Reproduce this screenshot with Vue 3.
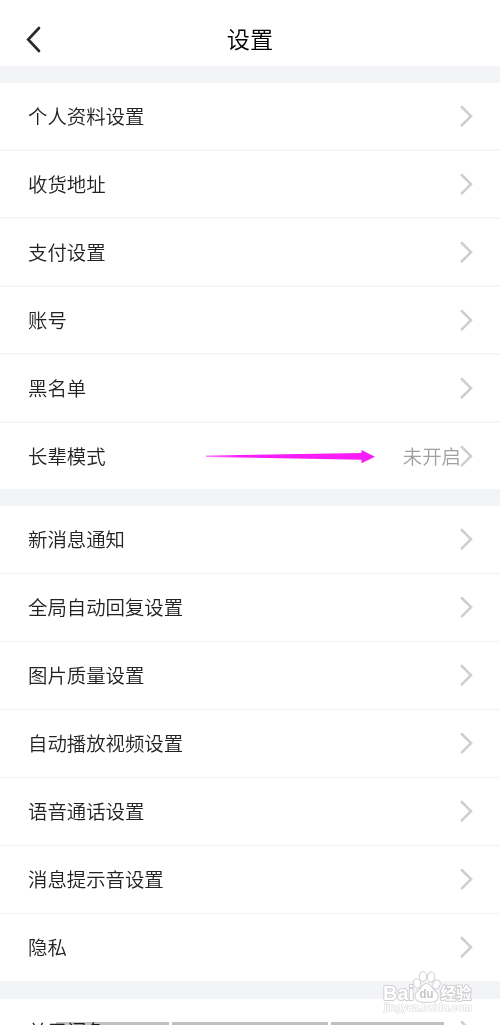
<script setup>
const groups = [
  [
    { label: '个人资料设置' },
    { label: '收货地址' },
    { label: '支付设置' },
    { label: '账号' },
    { label: '黑名单' },
    { label: '长辈模式', value: '未开启', arrow: true },
  ],
  [
    { label: '新消息通知' },
    { label: '全局自动回复设置' },
    { label: '图片质量设置' },
    { label: '自动播放视频设置' },
    { label: '语音通话设置' },
    { label: '消息提示音设置' },
    { label: '隐私' },
  ],
  [{ label: '关于闲鱼' }],
]
</script>

<template>
  <div class="screen">
    <header class="header">
      <svg class="back" width="20" height="30" viewBox="0 0 20 30">
        <path d="M14 4 3.200 15.500 14 27" fill="none" stroke="#2b2b2b" stroke-width="2.700" stroke-linecap="round" />
      </svg>
      <h1 class="title">设置</h1>
    </header>
    <section v-for="(group, g) in groups" :key="g" class="group">
      <div v-for="item in group" :key="item.label" class="row">
        <span class="label">{{ item.label }}</span>
        <svg v-if="item.arrow" class="pointer" width="172" height="16" viewBox="0 0 172 16">
          <defs>
            <linearGradient id="fade" x1="0" x2="1" y1="0" y2="0">
              <stop offset="0" stop-color="#f81df8" stop-opacity="0.55" />
              <stop offset="0.2" stop-color="#f81df8" />
            </linearGradient>
          </defs>
          <path d="M1 6.500 156.500 4V1L170 7.800 156.500 14.200V10.700L1 7.900Z" fill="url(#fade)" />
        </svg>
        <span v-if="item.value" class="value">{{ item.value }}</span>
        <svg class="chevron" width="13" height="22" viewBox="0 0 13 22">
          <path d="M1.800 2 11 11.200 1.800 20.400" fill="none" stroke="#cecece" stroke-width="2.500" stroke-linecap="round" />
        </svg>
      </div>
    </section>
    <div class="bars"><i></i><i></i><i></i></div>
    <svg class="mark" width="104" height="50" viewBox="0 0 104 50">
      <g fill="#fff" stroke="#d4d4d7" stroke-width="1.100">
        <ellipse cx="37" cy="17.500" rx="3.500" ry="4.700" transform="rotate(-15 37 17.500)" />
        <ellipse cx="43" cy="10.500" rx="3.700" ry="5" />
        <ellipse cx="51" cy="11" rx="3.700" ry="5" transform="rotate(10 51 11)" />
        <ellipse cx="56.500" cy="18.500" rx="3.500" ry="4.700" transform="rotate(20 56.500 18.500)" />
        <path d="M46.500 17.500C42.500 17.500 41.500 22 38 25C33.500 28 34 34 39 35.500C43 36.500 50 36.500 54.500 35.500C59.500 34 59.500 28 55 25C51.500 22 50.500 17.500 46.500 17.500Z" />
      </g>
      <g class="marktext">
        <text x="3" y="33.500" font-size="21" textLength="31" lengthAdjust="spacingAndGlyphs">Bai</text>
        <text x="39.500" y="32" font-size="13.500" textLength="14" lengthAdjust="spacingAndGlyphs" class="du">du</text>
        <text x="60.500" y="32.500" font-size="15.500" textLength="31">经验</text>
        <text x="4" y="45" font-size="10" textLength="88" lengthAdjust="spacingAndGlyphs" class="url">jingyan.baidu.com</text>
      </g>
    </svg>
  </div>
</template>

<style>
html,
body {
  overflow: hidden;
}
</style>

<style scoped>
.screen {
  position: relative;
  width: 500px;
  height: 1025px;
  overflow: hidden;
  background: #f3f4f8;
  font-family: 'Noto Sans CJK SC', sans-serif;
  font-weight: 350;
  color: #222;
}
.header {
  position: relative;
  height: 66px;
  background: #fff;
  display: flex;
  justify-content: center;
  padding-top: 12px;
  box-sizing: border-box;
}
.back {
  position: absolute;
  left: 25px;
  top: 24px;
}
.title {
  margin: 0;
  font-size: 23.2px;
  line-height: 53px;
  font-weight: 350;
  color: #000;
}
.group {
  margin-top: 17px;
  background: #fff;
}
.group:nth-of-type(3) {
  margin-top: 18px;
}
.row {
  position: relative;
  display: flex;
  align-items: center;
  height: 68px;
  box-sizing: border-box;
  padding: 0 26px 0 28px;
  border-bottom: 2px solid #f6f6f8;
}
.row:last-child {
  height: 66px;
  border-bottom: 0;
}
.group:nth-of-type(n + 2) .row {
  padding-bottom: 1px;
  border-bottom: 1px solid #f2f2f4;
}
.group:nth-of-type(n + 2) .row:last-child {
  height: 67px;
  border-bottom: 0;
}
.group:nth-of-type(3) .row:last-child {
  padding-bottom: 3px;
}
.label {
  flex: 1;
  font-size: 19.4px;
  line-height: 28px;
}
.value {
  font-size: 19.4px;
  line-height: 28px;
  color: #a0a0a0;
}
.chevron {
  display: block;
  margin-right: 1px;
}
.value + .chevron {
  margin-left: -1px;
}
.pointer {
  position: absolute;
  left: 205px;
  top: 26px;
}
.bars {
  position: absolute;
  left: 56px;
  top: 1022px;
  width: 388px;
  display: grid;
  grid-template-columns: 113px 156px 113px;
  gap: 3px;
  mix-blend-mode: multiply;
}
.bars i {
  height: 3px;
  background: #c1c1c1;
}
.mark {
  position: absolute;
  left: 380px;
  top: 966px;
}
.marktext {
  font-family: 'Liberation Sans', 'Noto Sans CJK SC', sans-serif;
  font-weight: 700;
  fill: #fff;
  stroke: #cfcfd2;
  stroke-width: 2px;
  paint-order: stroke;
  stroke-linejoin: round;
}
.du {
  fill: #c4c4c7;
  stroke: none;
}
.url {
  stroke-width: 1.2px;
  stroke: #dedee1;
}
</style>
